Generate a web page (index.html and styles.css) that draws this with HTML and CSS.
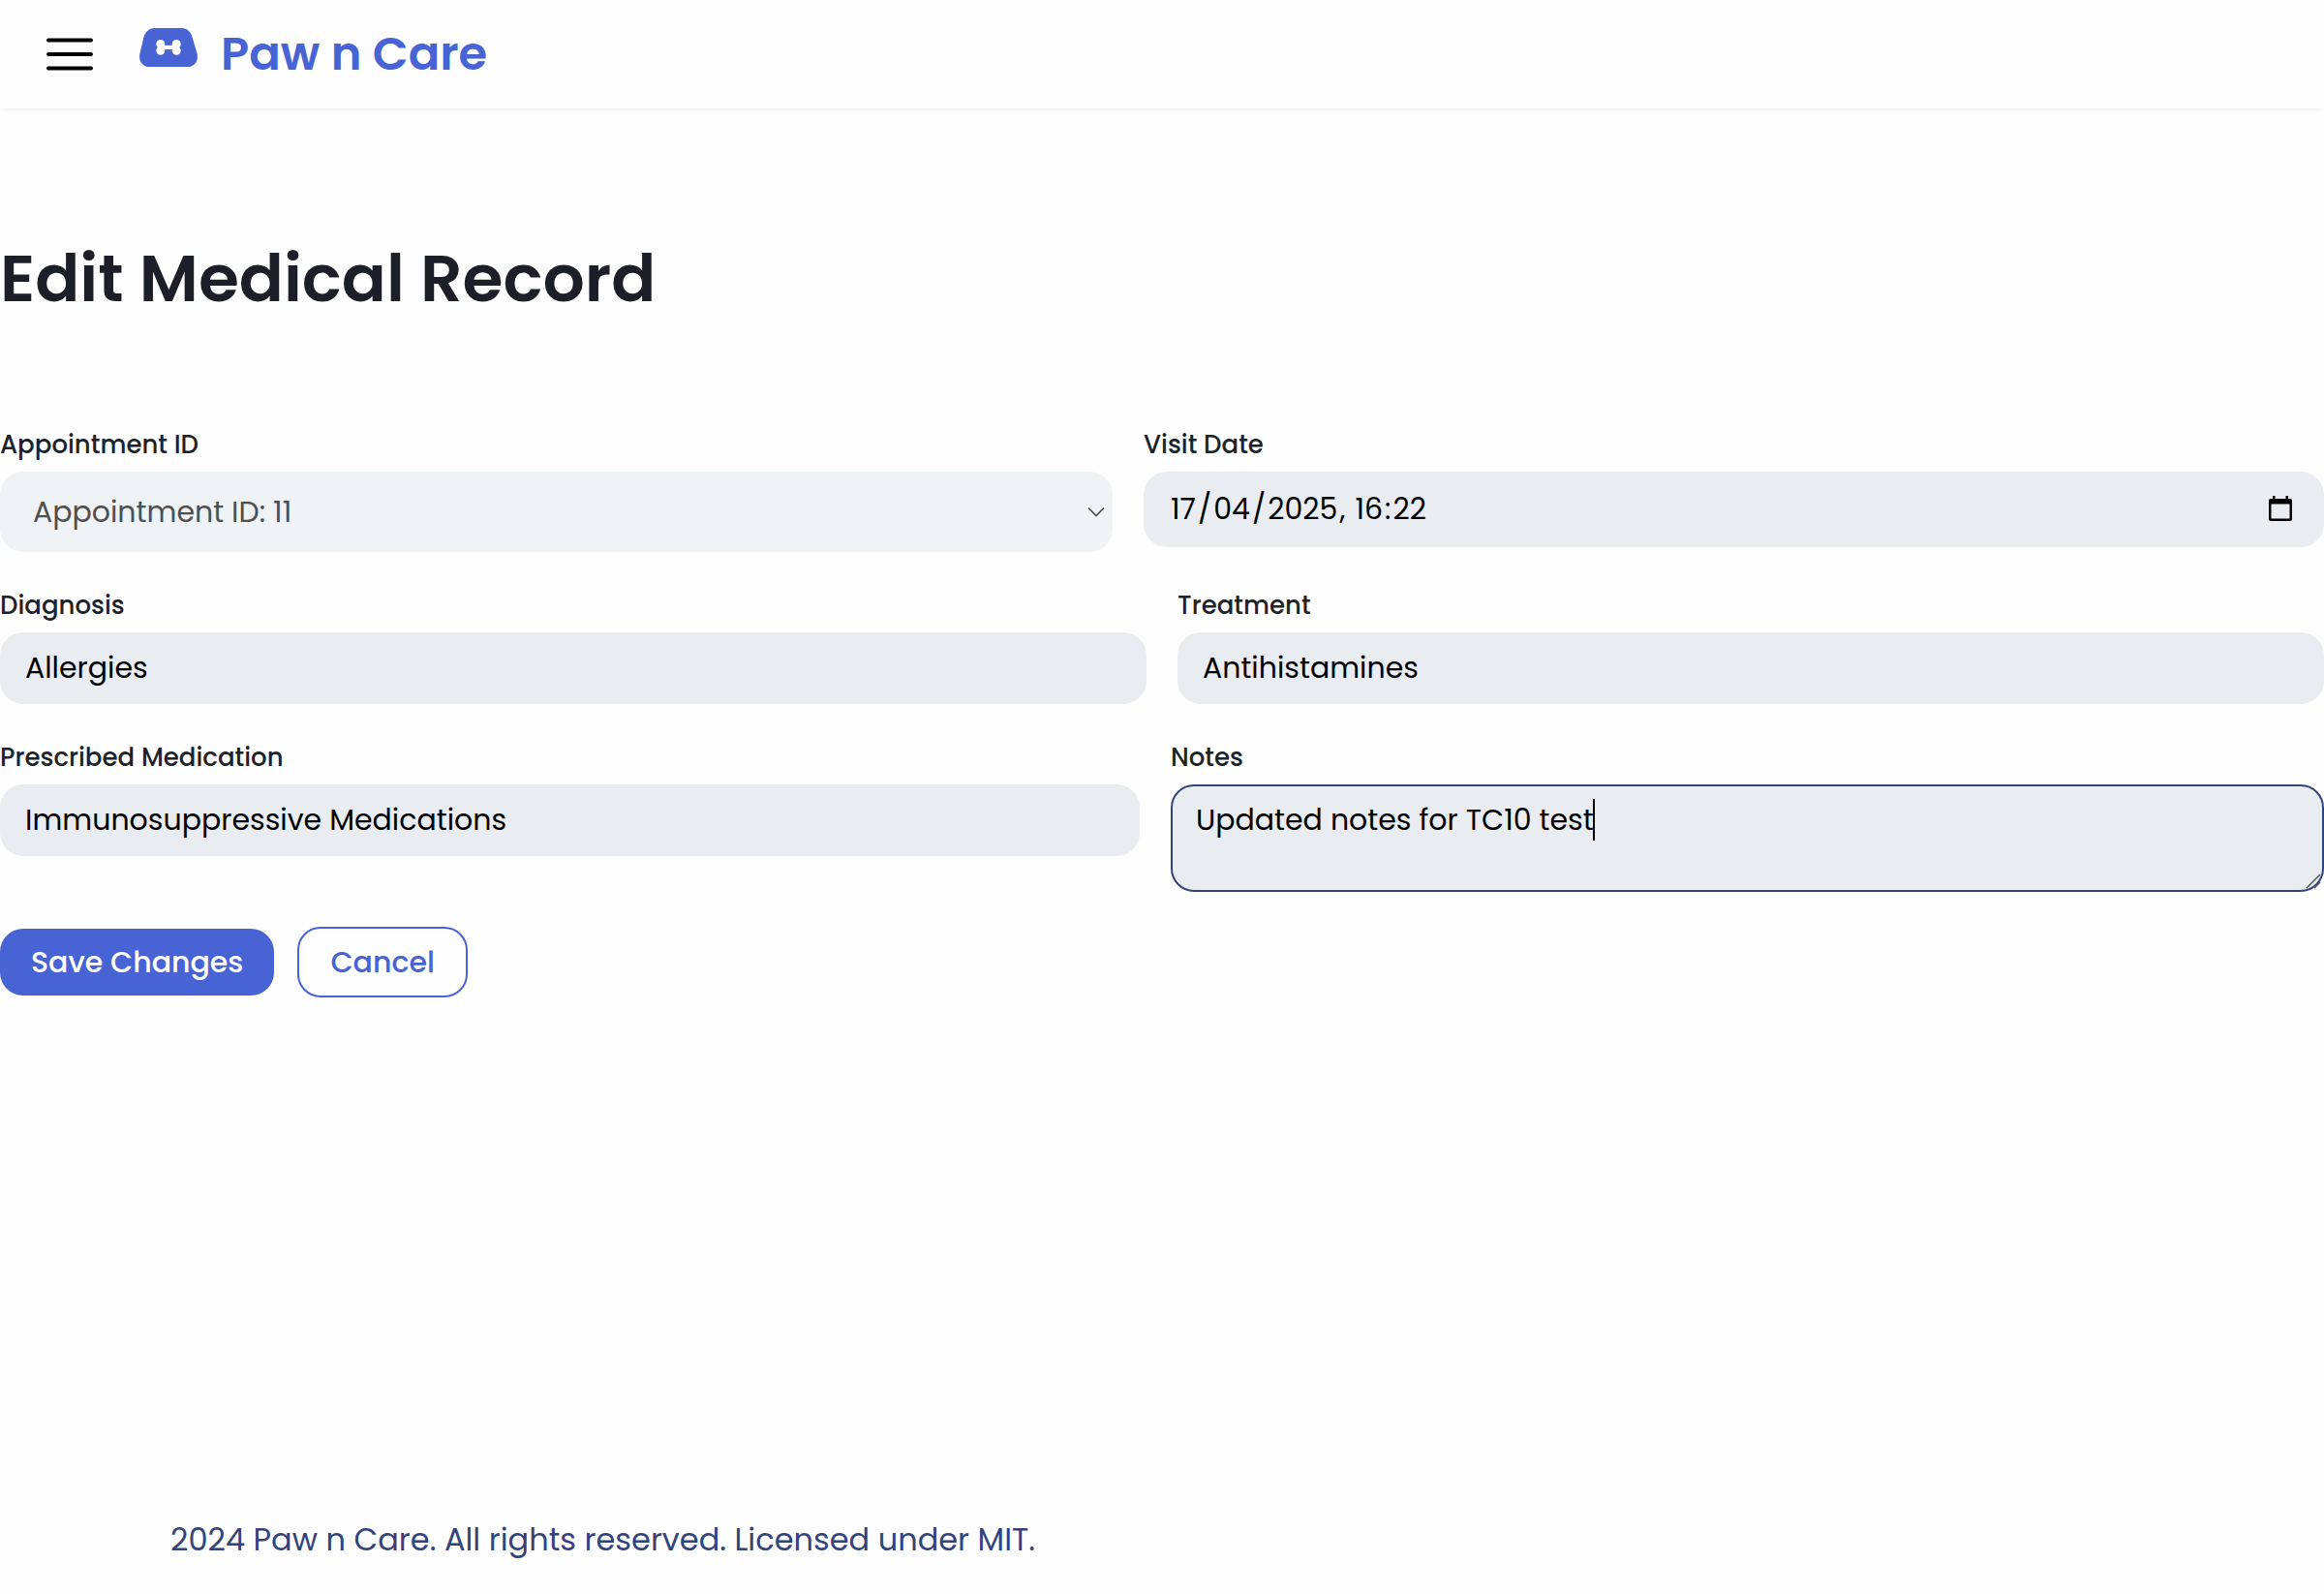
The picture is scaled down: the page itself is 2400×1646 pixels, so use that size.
FILE: index.html
```html
<!DOCTYPE html>
<html lang="en">
<head>
<meta charset="utf-8">
<title>Edit Medical Record - Paw n Care</title>
<link rel="stylesheet" href="styles.css">
</head>
<body>
<header class="topbar">
  <button class="menu-button" type="button" aria-label="Menu">
    <svg width="48" height="36" viewBox="0 0 48 36" fill="none" stroke="#000" stroke-width="4" stroke-linecap="round"><path d="M2 3.500H46M2 18H46M2 32.500H46"/></svg>
  </button>
  <a class="brand" href="#">
    <svg class="brand-logo" width="60" height="40" viewBox="0 0 60 40">
      <path fill="#4763d4" d="M16 0H44C49 0 53 4 54.500 9L59.700 27C61 34 56.500 40 50 40H10C3.500 40-1 34 .3 27L4.500 9C6 4 10 0 16 0Z"/>
      <g fill="#fefefe">
        <circle cx="21.800" cy="16.500" r="4.500"/>
        <circle cx="21.800" cy="23.300" r="4.500"/>
        <circle cx="38.200" cy="16.500" r="4.500"/>
        <circle cx="38.200" cy="23.300" r="4.500"/>
        <rect x="22" y="17.800" width="16" height="4.200"/>
      </g>
    </svg>
    <span class="brand-name">Paw n Care</span>
  </a>
</header>
<main class="content">
  <h1 class="title">Edit Medical Record</h1>
  <form class="record-form">
    <div class="row row-visit">
      <div class="field">
        <label for="appointment">Appointment ID</label>
        <div class="control">
          <select id="appointment" class="input select" disabled><option>Appointment ID: 11</option></select>
          <svg class="chevron" width="18" height="12" viewBox="0 0 18 12" fill="none" stroke="#4f4f4f" stroke-width="1.700"><path d="M1 1.500L9 9.500L17 1.500"/></svg>
        </div>
      </div>
      <div class="field">
        <label for="visit-day">Visit Date</label>
        <div class="control">
          <div class="input date" role="group" aria-label="Visit Date"><input id="visit-day" class="part" value="17" aria-label="Day"><span>/</span><input class="part" value="04" aria-label="Month"><span>/</span><input class="part" value="2025" aria-label="Year"><span class="comma">, </span><input class="part" value="16" aria-label="Hours"><span>:</span><input class="part" value="22" aria-label="Minutes"></div>
          <button class="picker" type="button" aria-label="Choose date">
            <svg width="24" height="26" viewBox="0 0 24 26"><path fill="#000" fill-rule="evenodd" d="M4 0H6.500V3H17.500V0H20V3H22Q24 3 24 5V24Q24 26 22 26H2Q0 26 0 24V5Q0 3 2 3H4ZM2.500 8.500V23.500H21.500V8.500Z"/></svg>
          </button>
        </div>
      </div>
    </div>
    <div class="row row-care">
      <div class="field">
        <label for="diagnosis">Diagnosis</label>
        <input id="diagnosis" class="input" type="text" value="Allergies">
      </div>
      <div class="field">
        <label for="treatment">Treatment</label>
        <input id="treatment" class="input" type="text" value="Antihistamines">
      </div>
    </div>
    <div class="row row-notes">
      <div class="field">
        <label for="medication">Prescribed Medication</label>
        <input id="medication" class="input" type="text" value="Immunosuppressive Medications">
      </div>
      <div class="field">
        <label for="notes">Notes</label>
        <div class="control">
          <textarea id="notes" class="input notes">Updated notes for TC10 test</textarea>
          <span class="caret"></span>
          <svg class="grip" width="16" height="16" viewBox="0 0 16 16" fill="none" stroke="#555" stroke-width="1.500"><path d="M1 15L15 1M9 15L15 9"/></svg>
        </div>
      </div>
    </div>
    <div class="actions">
      <button class="btn btn-primary" type="submit">Save Changes</button>
      <button class="btn btn-outline" type="button">Cancel</button>
    </div>
  </form>
</main>
<footer class="footer">2024 Paw n Care. All rights reserved. Licensed under MIT.</footer>
</body>
</html>
```
FILE: styles.css
```css
* {
  box-sizing: border-box;
}

body {
  margin: 0;
  min-height: 100vh;
  display: flex;
  flex-direction: column;
  background: #fefefe;
  color: #1b2329;
  font-family: Poppins, Inter, sans-serif;
}

button,
input,
select,
textarea {
  font: inherit;
  margin: 0;
}

.topbar {
  display: flex;
  align-items: center;
  gap: 48px;
  height: 112px;
  padding: 0 48px;
  box-shadow: 0 1px 4px rgba(0, 0, 0, 0.08);
}

.menu-button,
.picker {
  padding: 0;
  border: 0;
  background: none;
  line-height: 0;
}

.brand {
  display: flex;
  align-items: flex-start;
  gap: 24px;
  color: #4763d4;
  text-decoration: none;
}

.brand-name {
  font-size: 48px;
  font-weight: 600;
  line-height: 54px;
}

.content {
  flex: 1;
  padding-top: 122px;
}

.title {
  margin: 0 0 98px;
  color: #1c1e28;
  font-size: 68px;
  font-weight: 600;
  line-height: 108px;
}

.record-form {
  display: flex;
  flex-direction: column;
  gap: 36px;
}

.row {
  display: grid;
  gap: 32px;
  align-items: start;
}

.row-visit {
  grid-template-columns: 1149fr 1219fr;
}

.row-care {
  grid-template-columns: 1fr 1fr;
}

.row-notes {
  grid-template-columns: 1177fr 1191fr;
}

.field {
  display: flex;
  flex-direction: column;
  gap: 8px;
}

label {
  font-size: 26px;
  font-weight: 500;
  line-height: 39px;
}

.control {
  position: relative;
  display: flex;
}

.input {
  width: 100%;
  height: 74px;
  padding: 0 24px;
  border: 2px solid transparent;
  border-radius: 24px;
  outline: 0;
  background: #e9ecf1;
  color: #000;
  font-size: 30px;
}

.select {
  height: 83px;
  padding: 0 32px;
  appearance: none;
  background: #eff3f6;
  color: #4f4f4f;
  opacity: 1;
}

.date {
  display: flex;
  align-items: center;
  height: 78px;
}

.part {
  field-sizing: content;
  padding: 0 2px;
  border: 0;
  outline: 0;
  background: none;
  color: inherit;
}

.comma {
  white-space: pre;
}

.notes {
  height: 111px;
  padding: 12px 24px;
  border-color: #33437b;
  line-height: 45px;
  resize: none;
}

.chevron {
  position: absolute;
  right: 8px;
  top: 36px;
}

.picker {
  position: absolute;
  right: 33px;
  top: 25px;
}

.caret {
  position: absolute;
  left: 436px;
  top: 15px;
  width: 2px;
  height: 43px;
  background: #000;
}

.grip {
  position: absolute;
  right: 3px;
  bottom: 3px;
}

.actions {
  display: flex;
  align-items: center;
  gap: 24px;
}

.btn {
  height: 69px;
  padding: 0 32px;
  border: 0;
  border-radius: 24px;
  font-size: 30px;
  font-weight: 500;
}

.btn-primary {
  background: #4763d4;
  color: #fff;
}

.btn-outline {
  height: 73px;
  border: 2px solid #4763d4;
  background: #fefefe;
  color: #4763d4;
}

.footer {
  padding: 0 176px 32px;
  color: #33437b;
  font-size: 32px;
  line-height: 48px;
}
```
